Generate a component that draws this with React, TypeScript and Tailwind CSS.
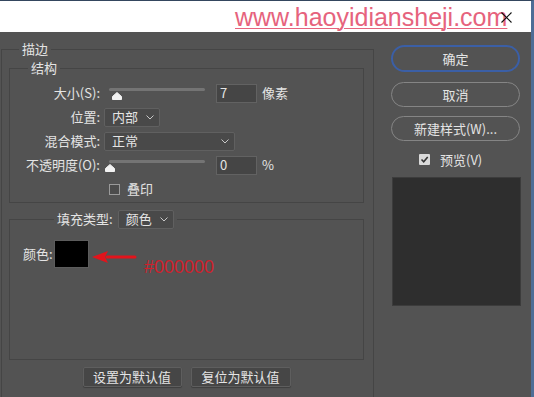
import React from "react";

function Chevron() {
  return (
    <svg width="8" height="5" viewBox="0 0 8 5" className="shrink-0">
      <path d="M0.5 0.5 L4 4 L7.5 0.5" fill="none" stroke="#c8c8c8" strokeWidth="1" />
    </svg>
  );
}

function Select({ value, width }: { value: string; width: string }) {
  return (
    <div
      className={`${width} h-[19px] flex items-center justify-between pl-[7px] pr-[5px] bg-[#494949] border border-[#606060] rounded-[2px]`}
    >
      <span>{value}</span>
      <Chevron />
    </div>
  );
}

function Slider({ at }: { at: number }) {
  return (
    <div className="relative w-[96px] h-[24px] ml-[9px]">
      <div className="absolute left-0 right-0 top-[7px] h-[3px] rounded-full bg-[#747474]" />
      <svg
        width="10"
        height="8"
        viewBox="0 0 10 8"
        className="absolute top-[11px]"
        style={{ left: at }}
      >
        <path d="M5 0.5 L9.5 4.5 L9.5 7.5 L0.5 7.5 L0.5 4.5 Z" fill="#f2f2f2" stroke="#f2f2f2" strokeLinejoin="round" />
      </svg>
    </div>
  );
}

function NumInput({ value }: { value: string }) {
  return (
    <div className="w-[41px] h-[19px] ml-[11px] flex items-center pl-[3px] bg-[#454545] border border-[#626262]">
      {value}
    </div>
  );
}

function Row({ label, children }: { label: string; children: React.ReactNode }) {
  return (
    <div className="h-[24px] flex items-center">
      <span className="w-[90px] text-right whitespace-nowrap">{label}</span>
      {children}
    </div>
  );
}

function RoundButton({ children, primary }: { children: React.ReactNode; primary?: boolean }) {
  return (
    <div
      className={`flex items-center justify-center rounded-full ${
        primary ? "h-[27px] border-2 border-[#3b5fa6]" : "h-[25px] border border-[#858585]"
      }`}
    >
      {children}
    </div>
  );
}

export default function App() {
  return (
    <div className="w-[534px] h-[397px] overflow-hidden flex flex-col bg-[#535353] text-[13px] leading-[18px] text-[#e4e4e4] font-['Noto_Sans_CJK_SC',sans-serif] border-t border-t-[#34465e] border-r-[3px] border-r-[#4d6d96]">
      <div className="h-[31px] shrink-0 bg-white flex items-start pl-[235px]">
        <span className="mt-[1px] text-[25px] leading-[30px] font-['Liberation_Sans',sans-serif] text-[#e6637d] underline underline-offset-[2px] decoration-[1px]">
          www.haoyidiansheji.com
        </span>
        <svg width="11" height="11" viewBox="0 0 11 11" className="mt-[11px] -ml-[6px]">
          <path d="M0.5 0.5 L10.5 10.5 M10.5 0.5 L0.5 10.5" stroke="#111" strokeWidth="1.1" />
        </svg>
      </div>

      <div className="flex flex-1">
        <div className="w-[374px] pl-[1px] pt-[8px]">
          <fieldset className="h-[400px] border border-[#454545]">
            <legend className="ml-[17px] px-[3px] leading-[18px]">描边</legend>
            <div className="pl-[7px] pr-[9px]">
              <fieldset className="mt-[1px] border border-[#454545]">
                <legend className="ml-[18px] px-[3px] leading-[18px]">结构</legend>
                <div className="pt-[4px] pb-[1px]">
                  <Row label="大小(S):">
                    <Slider at={3} />
                    <NumInput value="7" />
                    <span className="ml-[5px]">像素</span>
                  </Row>
                  <Row label="位置:">
                    <div className="ml-[4px]">
                      <Select value="内部" width="w-[56px]" />
                    </div>
                  </Row>
                  <Row label="混合模式:">
                    <div className="ml-[4px]">
                      <Select value="正常" width="w-[131px]" />
                    </div>
                  </Row>
                  <Row label="不透明度(O):">
                    <Slider at={-4} />
                    <NumInput value="0" />
                    <span className="ml-[5px]">%</span>
                  </Row>
                  <div className="h-[24px] flex items-center pl-[99px]">
                    <div className="w-[11px] h-[11px] border border-[#9a9a9a] bg-[#4c4c4c]" />
                    <span className="ml-[7px]">叠印</span>
                  </div>
                </div>
              </fieldset>

              <fieldset className="mt-[6px] h-[151px] border border-[#454545]">
                <legend className="ml-[44px] px-[3px]">
                  <div className="h-[20px] flex items-center">
                    <span>填充类型:</span>
                    <div className="ml-[5px]">
                      <Select value="颜色" width="w-[56px]" />
                    </div>
                  </div>
                </legend>
                <div className="flex items-start pl-[13px] pt-[11px]">
                  <span className="w-[31px] h-[28px] flex items-center">颜色:</span>
                  <div className="w-[35px] h-[28px] bg-black border border-[#5c5c5c]" />
                  <svg width="46" height="14" viewBox="0 0 46 14" className="mt-[10px] ml-[2px]">
                    <path d="M16 7 L44 7" stroke="#e3141c" strokeWidth="3" strokeLinecap="round" />
                    <path d="M1 7 L17 1 L14 7 L17 13 Z" fill="#e3141c" />
                  </svg>
                  <span className="mt-[17px] ml-[7px] text-[18px] leading-[20px] font-['Liberation_Sans',sans-serif] text-[#d0202c]">
                    #000000
                  </span>
                </div>
              </fieldset>

              <div className="mt-[7px] flex justify-center gap-[9px]">
                <div className="w-[99px] h-[20px] flex items-center justify-center bg-[#464646] border border-[#5e5e5e] rounded-[2px] shadow-[0_1px_1px_rgba(0,0,0,0.25)]">
                  设置为默认值
                </div>
                <div className="w-[100px] h-[20px] flex items-center justify-center bg-[#464646] border border-[#5e5e5e] rounded-[2px] shadow-[0_1px_1px_rgba(0,0,0,0.25)]">
                  复位为默认值
                </div>
              </div>
            </div>
          </fieldset>
        </div>

        <div className="ml-[17px] w-[129px] pt-[13px] flex flex-col">
          <RoundButton primary>确定</RoundButton>
          <div className="mt-[10px]">
            <RoundButton>取消</RoundButton>
          </div>
          <div className="mt-[9px]">
            <RoundButton>新建样式(W)...</RoundButton>
          </div>
          <div className="mt-[12px] h-[13px] flex items-center pl-[28px]">
            <div className="w-[11px] h-[11px] rounded-[1px] bg-[#dadada] flex items-center justify-center">
              <svg width="9" height="9" viewBox="0 0 9 9">
                <path d="M1.5 4.5 L3.7 6.7 L7.7 2" fill="none" stroke="#333" strokeWidth="1.6" />
              </svg>
            </div>
            <span className="ml-[10px]">预览(V)</span>
          </div>
          <div className="mt-[11px] ml-[1px] w-[129px] h-[129px] bg-[#2e2e2e] border border-[#3c3c3c]" />
        </div>
      </div>
    </div>
  );
}
